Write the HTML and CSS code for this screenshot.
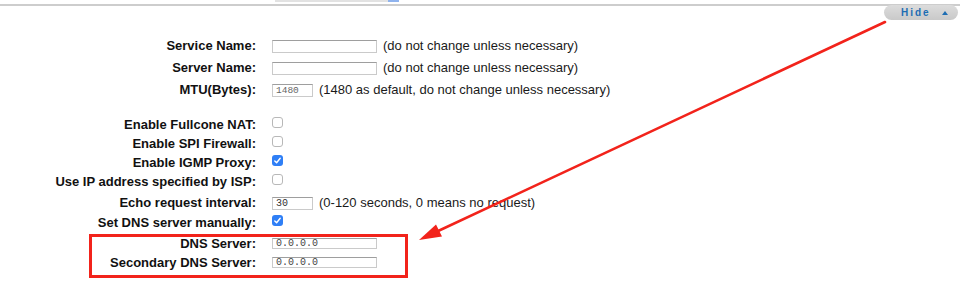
FILE: index.html
```html
<!DOCTYPE html>
<html lang="en">
<head>
    <meta charset="UTF-8">
    <meta name="viewport" content="width=device-width, initial-scale=1.0">
    <title>WAN Settings - Advanced</title>
    <link rel="stylesheet" href="styles.css">
</head>
<body>
    <div class="top-line">
        <div class="cut-select"></div>
    </div>

    <div class="toolbar">
        <button class="hide-btn" type="button">Hide<span class="caret"></span></button>
    </div>

    <form class="settings">
        <div class="row">
            <label class="label">Service Name:</label>
            <div class="field">
                <input class="text-input" type="text" value="">
                <span class="hint">(do not change unless necessary)</span>
            </div>
        </div>
        <div class="row">
            <label class="label">Server Name:</label>
            <div class="field">
                <input class="text-input" type="text" value="">
                <span class="hint">(do not change unless necessary)</span>
            </div>
        </div>
        <div class="row">
            <label class="label">MTU(Bytes):</label>
            <div class="field">
                <input class="text-input small light" type="text" value="1480">
                <span class="hint">(1480 as default, do not change unless necessary)</span>
            </div>
        </div>

        <div class="row short spaced">
            <label class="label">Enable Fullcone NAT:</label>
            <div class="field"><span class="check"></span></div>
        </div>
        <div class="row short">
            <label class="label">Enable SPI Firewall:</label>
            <div class="field"><span class="check"></span></div>
        </div>
        <div class="row short">
            <label class="label">Enable IGMP Proxy:</label>
            <div class="field">
                <span class="check on">
                    <svg viewBox="0 0 11 11" width="11" height="11"><path d="M2.8 5.9 L4.6 7.7 L8.2 3.3" fill="none" stroke="#fff" stroke-width="1.4" stroke-linecap="round" stroke-linejoin="round"/></svg>
                </span>
            </div>
        </div>
        <div class="row short">
            <label class="label">Use IP address specified by ISP:</label>
            <div class="field"><span class="check"></span></div>
        </div>
        <div class="row">
            <label class="label">Echo request interval:</label>
            <div class="field">
                <input class="text-input small" type="text" value="30">
                <span class="hint">(0-120 seconds, 0 means no request)</span>
            </div>
        </div>
        <div class="row short">
            <label class="label">Set DNS server manually:</label>
            <div class="field">
                <span class="check on">
                    <svg viewBox="0 0 11 11" width="11" height="11"><path d="M2.8 5.9 L4.6 7.7 L8.2 3.3" fill="none" stroke="#fff" stroke-width="1.4" stroke-linecap="round" stroke-linejoin="round"/></svg>
                </span>
            </div>
        </div>
        <div class="row">
            <label class="label">DNS Server:</label>
            <div class="field">
                <input class="text-input dns" type="text" value="0.0.0.0">
            </div>
        </div>
        <div class="row last">
            <label class="label">Secondary DNS Server:</label>
            <div class="field">
                <input class="text-input dns" type="text" value="0.0.0.0">
            </div>
        </div>
    </form>

    <!-- annotation drawn over the screenshot -->
    <div class="callout-box"></div>
    <svg class="callout-arrow" width="960" height="283" viewBox="0 0 960 283">
        <line x1="885" y1="22" x2="436" y2="232" stroke="#f2231b" stroke-width="2.6" stroke-linecap="round"/>
        <polygon points="419,240 442,236.5 436,224.5" fill="#f2231b"/>
    </svg>
</body>
</html>
```

FILE: styles.css
```css
* {
    margin: 0;
    padding: 0;
    box-sizing: border-box;
}

body {
    font-family: "Liberation Sans", Arial, sans-serif;
    font-size: 13px;
    color: #1a1a1a;
    background: #fff;
    width: 960px;
    height: 283px;
    overflow: hidden;
    position: relative;
}

.top-line {
    height: 6px;
    border-bottom: 2px solid #cdcdcd;
}

.cut-select {
    margin-left: 275px;
    width: 124px;
    height: 2px;
    background: linear-gradient(to right, #e2e2e2 0 113px, #8fb3ee 113px);
}

.toolbar {
    display: flex;
    justify-content: flex-end;
    padding-right: 2px;
    margin-top: -1px;
}

.hide-btn {
    display: flex;
    align-items: center;
    width: 74px;
    height: 15px;
    padding-left: 17px;
    border: none;
    border-radius: 8px;
    background: linear-gradient(#dcdcdc, #c9c9c9);
    font-family: "Liberation Sans", Arial, sans-serif;
    font-size: 10px;
    font-weight: 700;
    letter-spacing: 2px;
    color: #1d6db3;
}

.caret {
    width: 0;
    height: 0;
    margin-left: 11px;
    border-left: 3px solid transparent;
    border-right: 3px solid transparent;
    border-bottom: 4px solid #1d6db3;
}

.settings {
    margin-top: 14px;
}

.row {
    display: grid;
    grid-template-columns: 256px 1fr;
    column-gap: 16px;
    align-items: center;
    height: 22px;
}

.row.short {
    height: 19px;
}

.row.spaced {
    margin-top: 15px;
}

.row.last {
    height: 17px;
}

.label {
    text-align: right;
    font-weight: 700;
    color: #111;
    white-space: nowrap;
}

.field {
    display: flex;
    align-items: center;
}

.hint {
    margin-left: 6px;
    white-space: nowrap;
}

.text-input {
    width: 105px;
    height: 13px;
    margin-top: 3px;
    padding: 0 3px;
    border: 1px solid #cacaca;
    border-top-color: #9e9e9e;
    background: #fff;
    font-family: "Liberation Mono", monospace;
    font-size: 10px;
    color: #333;
    outline: none;
}

.text-input.small {
    width: 41px;
}

.text-input.light {
    font-size: 9.5px;
    color: #666;
}

.text-input.dns {
    height: 11px;
    margin-top: 0;
    color: #444;
}

.check {
    display: inline-block;
    width: 11px;
    height: 11px;
    margin-bottom: 4px;
    border: 1px solid #b8b8b8;
    border-radius: 3px;
    background: #fff;
}

.check.on {
    border: none;
    background: #2f7ff6;
}

.check svg {
    display: block;
}

.callout-box {
    position: absolute;
    left: 89px;
    top: 234px;
    width: 319px;
    height: 44px;
    border: 3px solid #f2231b;
}

.callout-arrow {
    position: absolute;
    left: 0;
    top: 0;
    pointer-events: none;
}
```
